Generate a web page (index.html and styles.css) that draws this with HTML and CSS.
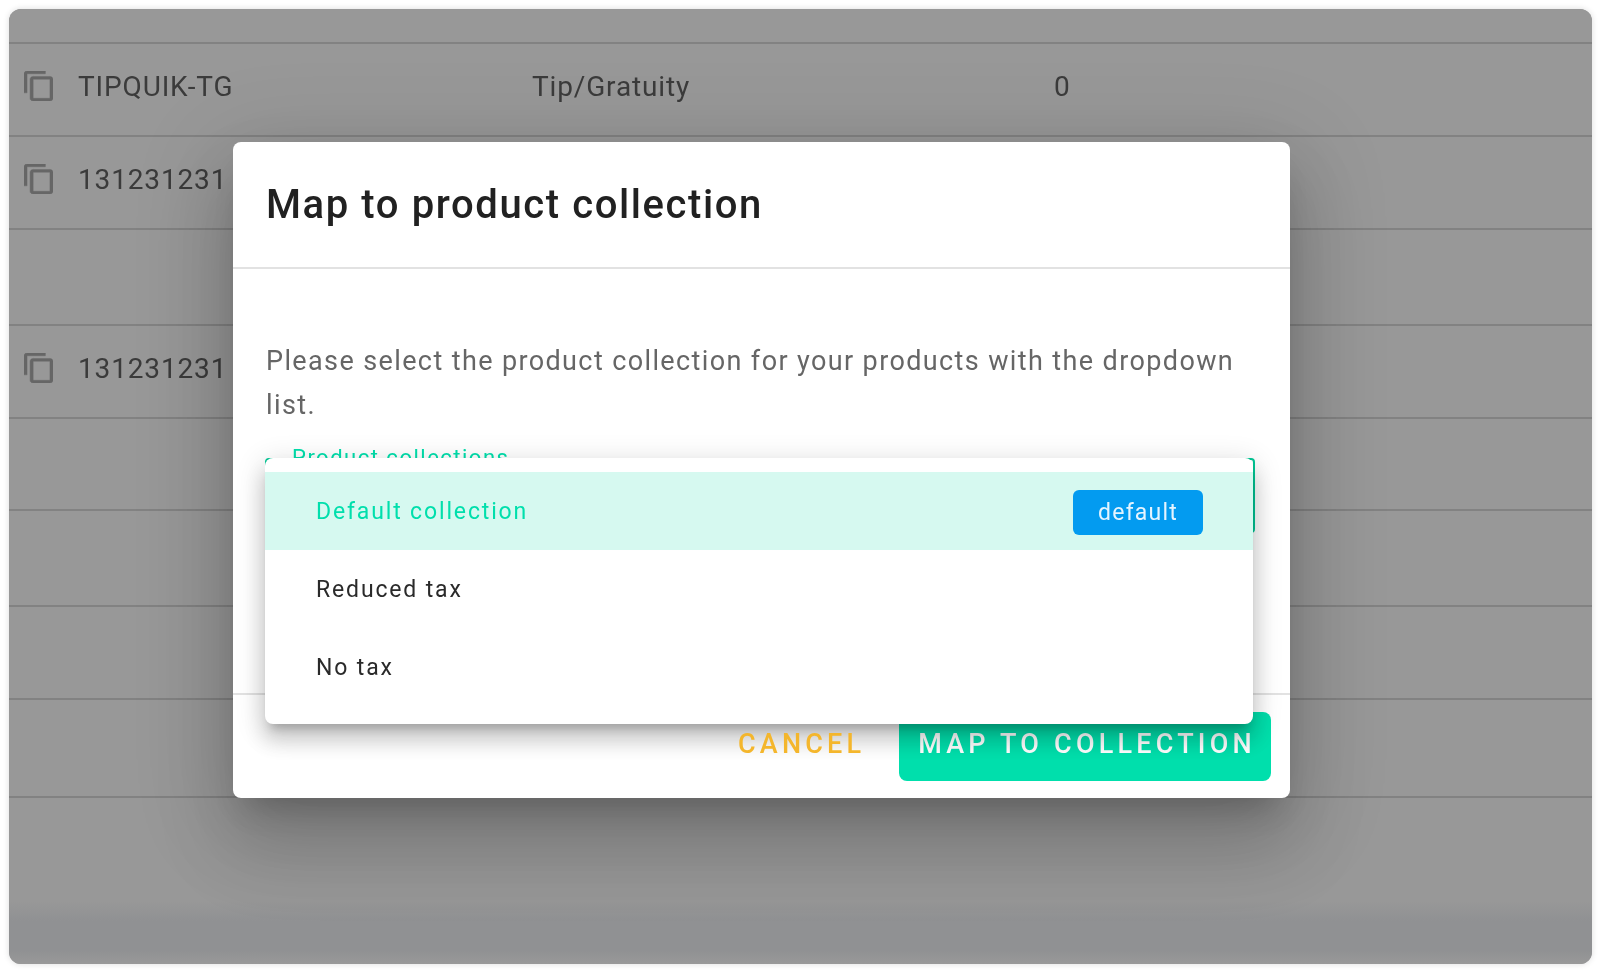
FILE: index.html
```html
<!DOCTYPE html>
<html lang="en">
<head>
<meta charset="utf-8">
<title>Map to product collection</title>
<link rel="stylesheet" href="styles.css">
</head>
<body>
<main class="frame">
  <section class="table">
    <div class="row"></div>
    <div class="row">
      <span class="cell-icon"><svg class="copy" viewBox="2 1 19 22" preserveAspectRatio="none"><path d="M16 1H4c-1.1 0-2 .9-2 2v14h2V3h12V1zm3 4H8c-1.1 0-2 .9-2 2v14c0 1.1.9 2 2 2h11c1.100 0 2-.9 2-2V7c0-1.100-.9-2-2-2zm0 16H8V7h11v14z"/></svg></span>
      <span class="cell-code">TIPQUIK-TG</span>
      <span class="cell-name">Tip/Gratuity</span>
      <span>0</span>
    </div>
    <div class="row">
      <span class="cell-icon"><svg class="copy" viewBox="2 1 19 22" preserveAspectRatio="none"><path d="M16 1H4c-1.1 0-2 .9-2 2v14h2V3h12V1zm3 4H8c-1.1 0-2 .9-2 2v14c0 1.1.9 2 2 2h11c1.100 0 2-.9 2-2V7c0-1.100-.9-2-2-2zm0 16H8V7h11v14z"/></svg></span>
      <span class="cell-code">131231231</span>
    </div>
    <div class="row"></div>
    <div class="row">
      <span class="cell-icon"><svg class="copy" viewBox="2 1 19 22" preserveAspectRatio="none"><path d="M16 1H4c-1.1 0-2 .9-2 2v14h2V3h12V1zm3 4H8c-1.1 0-2 .9-2 2v14c0 1.1.9 2 2 2h11c1.100 0 2-.9 2-2V7c0-1.100-.9-2-2-2zm0 16H8V7h11v14z"/></svg></span>
      <span class="cell-code">131231231</span>
    </div>
    <div class="row"></div>
    <div class="row"></div>
    <div class="row"></div>
    <div class="row"></div>
  </section>
  <div class="table-rest"></div>

  <section class="modal">
    <header class="modal-head"><h1>Map to product collection</h1></header>
    <div class="modal-body">
      <p>Please select the product collection for your products with the dropdown list.</p>
      <div class="field">
        <span class="field-label">Product collections</span>
        <ul class="menu">
          <li class="option option-active"><span>Default collection</span><span class="chip">default</span></li>
          <li class="option"><span>Reduced tax</span></li>
          <li class="option"><span>No tax</span></li>
        </ul>
      </div>
    </div>
    <footer class="modal-foot">
      <button class="btn-cancel" type="button">CANCEL</button>
      <button class="btn-primary" type="button">MAP TO COLLECTION</button>
    </footer>
  </section>
</main>
</body>
</html>
```
FILE: styles.css
```css
* { box-sizing: border-box; }
html, body { margin: 0; height: 100%; background: #fff; }
body { padding: 9px 8px 9px 9px; font-family: Roboto, "Liberation Sans", sans-serif; }

.frame {
  position: relative;
  height: 955px;
  display: flex;
  flex-direction: column;
  border-radius: 12px;
  overflow: hidden;
  background: #999;
  box-shadow: 0 0 6px rgba(0,0,0,.14);
  filter: blur(.7px);
}

.table {
  display: grid;
  grid-template-rows: 35px 93px 93px 96px 93px 92px 96px 93px 98px;
  background: #989898;
  flex: none;
}
.row {
  display: flex;
  align-items: center;
  padding: 0 0 7px 15px;
  border-bottom: 2px solid #828282;
  font-size: 28px;
  letter-spacing: .85px;
  color: #3b3b3b;
}
.cell-icon { width: 54px; display: flex; }
.copy { width: 29px; height: 30px; fill: #666; stroke: #666; stroke-width: .3; }
.cell-code { width: 454px; }
.cell-name { width: 522px; }

.table-rest {
  flex: 1;
  background: linear-gradient(#989898 0, #989898 62%, #909193 74%, #909193 92%, #999 100%);
}

.modal {
  position: absolute;
  left: 224px;
  top: 133px;
  width: 1057px;
  height: 656px;
  display: flex;
  flex-direction: column;
  background: #fff;
  border-radius: 8px;
  box-shadow: 0 22px 30px -14px rgba(0,0,0,.2), 0 48px 76px 6px rgba(0,0,0,.14), 0 18px 92px 16px rgba(0,0,0,.12);
}
.modal-head {
  height: 127px;
  flex: none;
  display: flex;
  align-items: center;
  padding: 0 33px;
  border-bottom: 2px solid #e2e2e2;
}
h1 {
  margin: 0;
  font-size: 40px;
  font-weight: 500;
  letter-spacing: 1.6px;
  color: #212121;
}
.modal-body { flex: 1; padding: 70px 35px 0 33px; }
p {
  margin: 0;
  font-size: 27px;
  line-height: 44px;
  letter-spacing: 1.38px;
  color: #666;
}
.field {
  position: relative;
  margin: 31px 0 0 -1px;
  height: 75px;
  border: 2px solid #00c896;
  border-radius: 4px;
}
.field-label {
  position: absolute;
  left: 25px;
  top: -15px;
  font-size: 22px;
  letter-spacing: 1.5px;
  color: #00dfac;
}
.menu {
  position: absolute;
  left: -2px;
  top: -2px;
  width: 988px;
  height: 266px;
  margin: 0;
  padding: 14px 0;
  list-style: none;
  background: #fff;
  border-radius: 8px;
  box-shadow: 0 10px 10px -6px rgba(0,0,0,.2), 0 16px 20px 2px rgba(0,0,0,.14), 0 6px 28px 4px rgba(0,0,0,.12);
}
.option {
  height: 78px;
  display: flex;
  align-items: center;
  justify-content: space-between;
  padding: 0 50px 0 51px;
  font-size: 23px;
  letter-spacing: 1.85px;
  color: #2a2a2a;
}
.option-active { background: #d6f9f0; color: #00dfac; }
.chip {
  width: 130px;
  height: 45px;
  margin-top: 2px;
  display: flex;
  align-items: center;
  justify-content: center;
  background: #039bf0;
  border-radius: 6px;
  letter-spacing: 1.2px;
  color: #e4f4ff;
}
.modal-foot {
  height: 105px;
  flex: none;
  display: flex;
  justify-content: flex-end;
  gap: 36px;
  padding: 17px 19px 17px 0;
  border-top: 2px solid #e2e2e2;
}
button {
  border: 0;
  padding: 0 0 5px;
  font-family: inherit;
  font-size: 27px;
  font-weight: 500;
  letter-spacing: 4.2px;
  background: none;
}
.btn-cancel { position: relative; z-index: 1; width: 125px; color: #f4b62c; white-space: nowrap; }
.btn-primary {
  width: 372px;
  padding-left: 4px;
  background: #00dfac;
  color: #fff;
  border-radius: 8px;
}
```
